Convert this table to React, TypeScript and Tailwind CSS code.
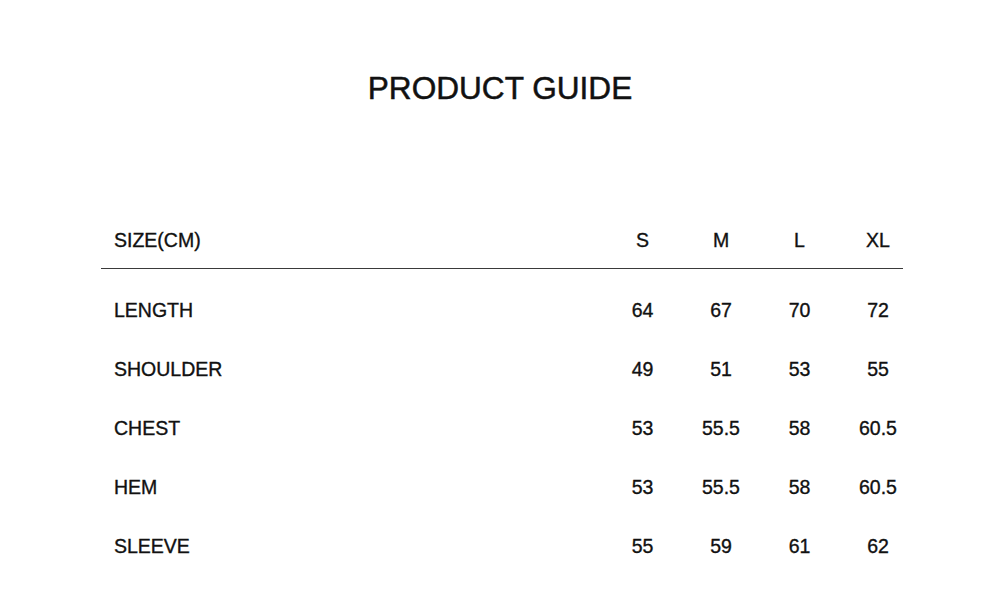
import React from "react";

const sizes = ["S", "M", "L", "XL"];
const rows: { label: string; values: string[] }[] = [
  { label: "LENGTH", values: ["64", "67", "70", "72"] },
  { label: "SHOULDER", values: ["49", "51", "53", "55"] },
  { label: "CHEST", values: ["53", "55.5", "58", "60.5"] },
  { label: "HEM", values: ["53", "55.5", "58", "60.5"] },
  { label: "SLEEVE", values: ["55", "59", "61", "62"] },
];

function Row({ label, values, header }: { label: string; values: string[]; header?: boolean }) {
  return (
    <div className={`flex items-center ${header ? "h-[40px]" : "h-[59px]"}`}>
      <div className="flex-1 pl-[13px] leading-none">{label}</div>
      <div className="flex gap-[28.5px]">
        {values.map((v, i) => (
          <div key={i} className="w-[50px] text-center leading-none whitespace-nowrap">
            {v}
          </div>
        ))}
      </div>
    </div>
  );
}

export default function App() {
  return (
    <div
      className="w-[1000px] h-[607px] bg-white text-[#111111] overflow-hidden [-webkit-text-stroke:0.35px_#111111]"
      style={{ fontFamily: '"Liberation Sans", Arial, sans-serif' }}
    >
      <div className="pt-[73px] text-center text-[31.6px] leading-[31px] [-webkit-text-stroke:0.5px_#111111]">
        PRODUCT GUIDE
      </div>
      <div className="ml-[101px] w-[802px] mt-[117px] text-[19.5px]">
        <Row label="SIZE(CM)" values={sizes} header />
        <div className="mt-[7px] h-px bg-[#3a3a3a]" />
        <div className="mt-[12px]">
          {rows.map((r) => (
            <Row key={r.label} label={r.label} values={r.values} />
          ))}
        </div>
      </div>
    </div>
  );
}
